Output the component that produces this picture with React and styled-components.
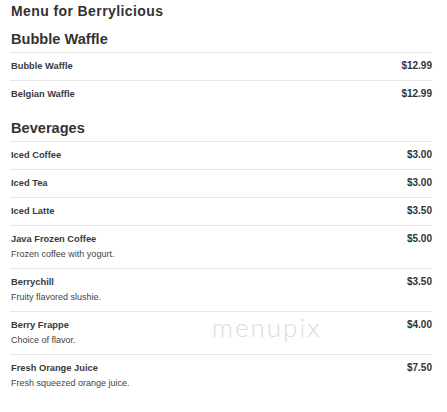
import React from 'react';
import styled, { createGlobalStyle } from 'styled-components';

const GlobalStyle = createGlobalStyle`
  body {
    margin: 0;
    background: #fff;
    font-family: "Liberation Sans", Arial, sans-serif;
    color: #333;
  }
`;

const menu = [
  {
    name: 'Bubble Waffle',
    items: [
      { name: 'Bubble Waffle', price: '$12.99' },
      { name: 'Belgian Waffle', price: '$12.99' },
    ],
  },
  {
    name: 'Beverages',
    items: [
      { name: 'Iced Coffee', price: '$3.00' },
      { name: 'Iced Tea', price: '$3.00' },
      { name: 'Iced Latte', price: '$3.50' },
      { name: 'Java Frozen Coffee', price: '$5.00', desc: 'Frozen coffee with yogurt.' },
      { name: 'Berrychill', price: '$3.50', desc: 'Fruity flavored slushie.' },
      { name: 'Berry Frappe', price: '$4.00', desc: 'Choice of flavor.' },
      { name: 'Fresh Orange Juice', price: '$7.50', desc: 'Fresh squeezed orange juice.' },
    ],
  },
];

const Page = styled.div`
  position: relative;
  padding: 2px 15px 0 10px;
`;

const Title = styled.h1`
  margin: 0;
  padding-left: 1px;
  font-size: 14px;
  line-height: 18px;
  letter-spacing: 0.4px;
  font-weight: bold;
  color: #333;
`;

const Section = styled.section`
  margin-top: ${(p) => (p.first ? '9px' : '10px')};
`;

const SectionTitle = styled.h2`
  margin: 0;
  padding: 0 0 3px 1px;
  font-size: 14.6px;
  line-height: 20px;
  font-weight: bold;
  color: #333;
`;

const Row = styled.div`
  display: flex;
  justify-content: space-between;
  align-items: flex-start;
  border-top: 1px solid #e6e6e6;
  padding: 7px 0 8px 1px;
`;

const ItemInfo = styled.div`
  display: flex;
  flex-direction: column;
  gap: 3px;
`;

const ItemName = styled.div`
  font-size: 9.3px;
  line-height: 12px;
  font-weight: bold;
  color: #3a3a3a;
`;

const ItemDesc = styled.div`
  font-size: 9px;
  line-height: 12px;
  color: #444;
`;

const Price = styled.div`
  font-size: 10px;
  line-height: 12px;
  font-weight: bold;
  color: #333;
`;

const Watermark = styled.div`
  position: absolute;
  left: 212px;
  top: 311px;
  font-family: Lato, "Open Sans", sans-serif;
  font-weight: 300;
  font-size: 26px;
  letter-spacing: 2px;
  color: #dcdcdc;
  pointer-events: none;
`;

const App = () => (
  <Page>
    <GlobalStyle />
    <Title>Menu for Berrylicious</Title>
    {menu.map((section, i) => (
      <Section key={section.name} first={i === 0}>
        <SectionTitle>{section.name}</SectionTitle>
        {section.items.map((item) => (
          <Row key={item.name}>
            <ItemInfo>
              <ItemName>{item.name}</ItemName>
              {item.desc && <ItemDesc>{item.desc}</ItemDesc>}
            </ItemInfo>
            <Price>{item.price}</Price>
          </Row>
        ))}
      </Section>
    ))}
    <Watermark>menupix</Watermark>
  </Page>
);

export default App;
